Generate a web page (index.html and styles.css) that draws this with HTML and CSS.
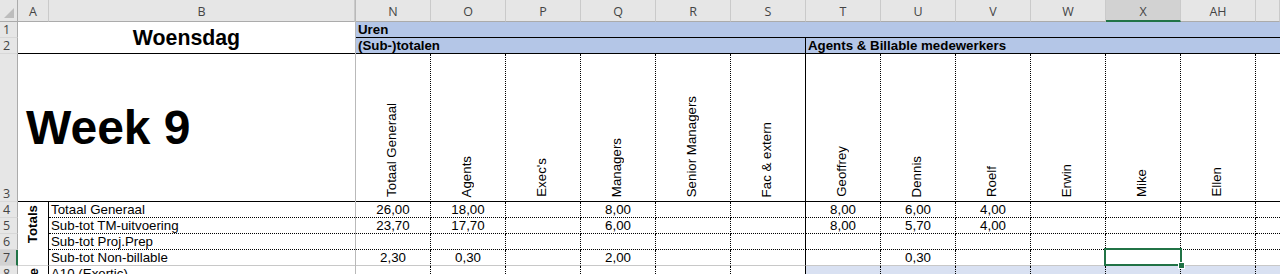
FILE: index.html
```html
<!DOCTYPE html>
<html lang="nl">
<head>
<meta charset="utf-8">
<title>Woensdag – Week 9</title>
<link rel="stylesheet" href="styles.css">
</head>
<body>
<div class="sheet">
  <div class="freeze"></div>

  <div class="corner"><span class="tri"></span></div>
  <div class="colh">A</div>
  <div class="colh">B</div>
  <div class="colh">N</div>
  <div class="colh">O</div>
  <div class="colh">P</div>
  <div class="colh">Q</div>
  <div class="colh">R</div>
  <div class="colh">S</div>
  <div class="colh">T</div>
  <div class="colh">U</div>
  <div class="colh">V</div>
  <div class="colh">W</div>
  <div class="colh sel">X</div>
  <div class="colh">AH</div>
  <div class="colh"></div>

  <div class="rowh">1</div>
  <div class="cell title">Woensdag</div>
  <div class="cell band band-top">Uren</div>

  <div class="rowh">2</div>
  <div class="cell band band-sub sep">(Sub-)totalen</div>
  <div class="cell band band-agents">Agents &amp; Billable medewerkers</div>

  <div class="rowh">3</div>
  <div class="cell week">Week 9</div>
  <div class="cell vh"><span>Totaal Generaal</span></div>
  <div class="cell vh"><span>Agents</span></div>
  <div class="cell vh"><span>Exec's</span></div>
  <div class="cell vh"><span>Managers</span></div>
  <div class="cell vh"><span>Senior Managers</span></div>
  <div class="cell vh sep"><span>Fac &amp; extern</span></div>
  <div class="cell vh"><span>Geoffrey</span></div>
  <div class="cell vh"><span>Dennis</span></div>
  <div class="cell vh"><span>Roelf</span></div>
  <div class="cell vh"><span>Erwin</span></div>
  <div class="cell vh"><span>Mike</span></div>
  <div class="cell vh"><span>Ellen</span></div>
  <div class="cell vh-end"></div>

  <div class="rowh">4</div>
  <div class="cell totals"><span>Totals</span></div>
  <div class="cell lbl">Totaal Generaal</div>
  <div class="cell d">26,00</div>
  <div class="cell d">18,00</div>
  <div class="cell d"></div>
  <div class="cell d">8,00</div>
  <div class="cell d"></div>
  <div class="cell d sep"></div>
  <div class="cell d">8,00</div>
  <div class="cell d">6,00</div>
  <div class="cell d">4,00</div>
  <div class="cell d"></div>
  <div class="cell d"></div>
  <div class="cell d"></div>
  <div class="cell end"></div>

  <div class="rowh">5</div>
  <div class="cell lbl">Sub-tot TM-uitvoering</div>
  <div class="cell d">23,70</div>
  <div class="cell d">17,70</div>
  <div class="cell d"></div>
  <div class="cell d">6,00</div>
  <div class="cell d"></div>
  <div class="cell d sep"></div>
  <div class="cell d">8,00</div>
  <div class="cell d">5,70</div>
  <div class="cell d">4,00</div>
  <div class="cell d"></div>
  <div class="cell d"></div>
  <div class="cell d"></div>
  <div class="cell end"></div>

  <div class="rowh">6</div>
  <div class="cell lbl">Sub-tot Proj.Prep</div>
  <div class="cell d"></div>
  <div class="cell d"></div>
  <div class="cell d"></div>
  <div class="cell d"></div>
  <div class="cell d"></div>
  <div class="cell d sep"></div>
  <div class="cell d"></div>
  <div class="cell d"></div>
  <div class="cell d"></div>
  <div class="cell d"></div>
  <div class="cell d"></div>
  <div class="cell d"></div>
  <div class="cell end"></div>

  <div class="rowh sel">7</div>
  <div class="cell lbl r7">Sub-tot Non-billable</div>
  <div class="cell d r7">2,30</div>
  <div class="cell d r7">0,30</div>
  <div class="cell d r7"></div>
  <div class="cell d r7">2,00</div>
  <div class="cell d r7"></div>
  <div class="cell d r7 sep"></div>
  <div class="cell d r7"></div>
  <div class="cell d r7">0,30</div>
  <div class="cell d r7"></div>
  <div class="cell d r7"></div>
  <div class="cell d r7 active"><span class="selbox"></span><span class="handle"></span></div>
  <div class="cell d r7"></div>
  <div class="cell end r7"></div>

  <div class="rowh">8</div>
  <div class="cell grp"><span>Billable</span></div>
  <div class="cell lbl8">A10 (Exertic)</div>
  <div class="cell d8"></div>
  <div class="cell d8"></div>
  <div class="cell d8"></div>
  <div class="cell d8"></div>
  <div class="cell d8"></div>
  <div class="cell d8 sep"></div>
  <div class="cell d8 blue"></div>
  <div class="cell d8 blue"></div>
  <div class="cell d8 blue"></div>
  <div class="cell d8 blue"></div>
  <div class="cell d8 blue"></div>
  <div class="cell d8 blue"></div>
  <div class="cell end8 blue"></div>
</div>
</body>
</html>
```

FILE: styles.css
```css
* {
  box-sizing: border-box;
  margin: 0;
  padding: 0;
}

html,
body {
  width: 1280px;
  height: 274px;
  overflow: hidden;
  background: #ffffff;
}

body {
  font-family: "Liberation Sans", Arial, sans-serif;
  font-size: 13.3px;
  color: #000000;
}

.sheet {
  display: grid;
  grid-template-columns: 18px 31px 306px 1px repeat(12, 75px) 24px;
  grid-template-rows: 22px 16px 16px 148px 16px 16px 16px 16px 16px;
}

.sheet > div {
  overflow: hidden;
  white-space: nowrap;
}

.freeze {
  grid-column: 4;
  grid-row: 1 / span 9;
  background: #b9b9b9;
}

/* headers */
.corner {
  position: relative;
  background: #e6e6e6;
  border-right: 1px solid #ababab;
  border-bottom: 1px solid #ababab;
}

.tri {
  position: absolute;
  right: 3px;
  bottom: 3px;
  width: 0;
  height: 0;
  border-left: 10px solid transparent;
  border-bottom: 10px solid #bdbdbd;
}

.colh {
  display: flex;
  align-items: center;
  justify-content: center;
  padding-top: 2px;
  background: #e6e6e6;
  border-right: 1px solid #cacaca;
  border-bottom: 1px solid #ababab;
  font-family: "Open Sans", "Liberation Sans", sans-serif;
  font-size: 12.5px;
  color: #444444;
}

.colh.sel {
  background: #d2d2d2;
  border-bottom: 2px solid #217346;
}

.rowh {
  display: flex;
  align-items: flex-end;
  padding-left: 3px;
  line-height: 15px;
  background: #e6e6e6;
  border-right: 1px solid #ababab;
  border-bottom: 1px solid #d8d8d8;
  font-family: "Open Sans", "Liberation Sans", sans-serif;
  font-size: 12.5px;
  color: #444444;
}

.rowh.sel {
  background: #d2d2d2;
  border-right: 2px solid #217346;
}

/* cells */
.cell {
  display: flex;
  align-items: flex-end;
  padding: 0 2px;
  line-height: 15px;
  border-right: 1px solid #d4d4d4;
  border-bottom: 1px solid #d4d4d4;
}

.title {
  grid-column: span 2;
  grid-row: span 2;
  align-items: center;
  justify-content: center;
  border-right: none;
  border-bottom: 1px solid #000000;
  font-size: 21.3px;
  font-weight: bold;
  line-height: 24px;
}

.band {
  background: #b4c6e7;
  font-weight: bold;
  border-right: none;
  border-bottom: 1px solid #000000;
}

.band-top {
  grid-column: span 13;
}

.band-sub {
  grid-column: span 6;
}

.band-agents {
  grid-column: span 7;
}

.week {
  grid-column: span 2;
  align-items: center;
  padding-left: 8px;
  border-right: none;
  border-bottom: 1px solid #000000;
  font-size: 48px;
  font-weight: bold;
  line-height: 56px;
}

.vh {
  flex-direction: column;
  justify-content: flex-end;
  align-items: center;
  padding: 0 3px 4px 0;
  border-right: 1px dotted #000000;
  border-bottom: 1px solid #000000;
}

.vh > span,
.totals > span,
.grp > span {
  writing-mode: vertical-rl;
  transform: rotate(180deg);
}

.vh-end {
  border-right: none;
  border-bottom: 1px solid #000000;
}

.totals {
  grid-row: span 4;
  flex-direction: column;
  justify-content: flex-start;
  align-items: center;
  padding: 3px 2px 0 0;
  border-right: 1px solid #000000;
  font-weight: bold;
}

.lbl {
  border-right: none;
  border-bottom: 1px dotted #000000;
}

.d {
  justify-content: center;
  border-right: 1px dotted #000000;
  border-bottom: 1px dotted #000000;
}

.end {
  border-right: none;
  border-bottom: 1px dotted #000000;
}

.cell.r7 {
  border-bottom: 1px solid #c8c8c8;
}

.grp {
  flex-direction: column;
  justify-content: flex-start;
  align-items: center;
  padding: 2px 0 0 0;
  border-right: 1px solid #000000;
  font-weight: bold;
}

.lbl8 {
  border-right: none;
}

.d8 {
  border-right: 1px dotted #000000;
}

.end8 {
  border-right: none;
}

.blue {
  background: #d9e1f2;
}

.cell.sep {
  border-right: 1px solid #000000;
}

/* active cell X7 */
.sheet > .active {
  position: relative;
  overflow: visible;
}

.selbox {
  position: absolute;
  left: -2px;
  top: -2px;
  width: 78px;
  height: 18px;
  border: 2px solid #217346;
  z-index: 2;
}

.handle {
  position: absolute;
  left: 72px;
  top: 12px;
  width: 7px;
  height: 7px;
  background: #217346;
  border: 1px solid #ffffff;
  z-index: 3;
}
```
